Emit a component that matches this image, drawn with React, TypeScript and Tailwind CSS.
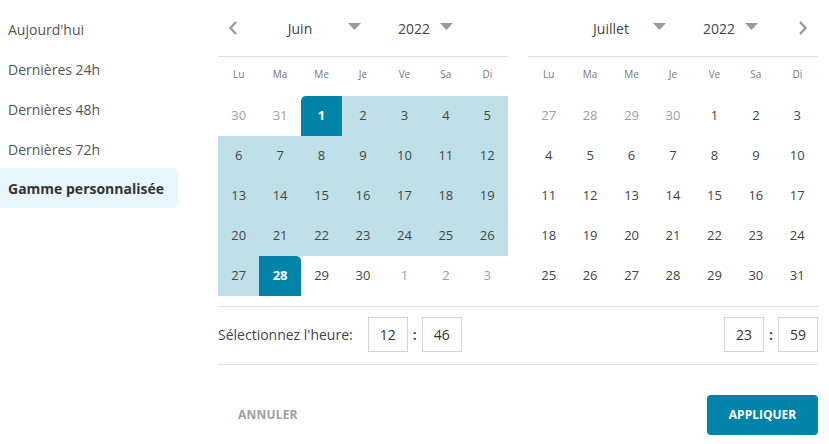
import React from "react";

type Cell = { d: number; out?: boolean; sel?: "start" | "end"; range?: boolean };

const june: Cell[] = [
  { d: 30, out: true }, { d: 31, out: true }, { d: 1, sel: "start" },
  ...[2,3,4,5,6,7,8,9,10,11,12,13,14,15,16,17,18,19,20,21,22,23,24,25,26,27].map((d) => ({ d, range: true })),
  { d: 28, sel: "end" }, { d: 29 }, { d: 30 }, { d: 1, out: true }, { d: 2, out: true }, { d: 3, out: true },
];

const july: Cell[] = [
  { d: 27, out: true }, { d: 28, out: true }, { d: 29, out: true }, { d: 30, out: true },
  ...Array.from({ length: 31 }, (_, i) => ({ d: i + 1 })),
];

const dayNames = ["Lu", "Ma", "Me", "Je", "Ve", "Sa", "Di"];

function Triangle() {
  return (
    <svg width="13" height="7" viewBox="0 0 13 7" className="mt-[-4px]">
      <path d="M0 0 L13 0 L6.5 7 Z" fill="#9a9a9a" />
    </svg>
  );
}

function Grid({ cells }: { cells: Cell[] }) {
  return (
    <div className="grid grid-cols-7">
      {cells.map((c, i) => {
        let cls = "h-[40px] flex items-center justify-center text-[13px] ";
        if (c.sel) {
          cls += "bg-[#0083a8] text-white font-bold ";
          cls += c.sel === "start" ? "rounded-tl-[5px] " : "rounded-tr-[5px] ";
        } else if (c.range) {
          cls += "bg-[#c0e0e8] text-[#444] ";
        } else if (c.out) {
          cls += "text-[#a0a0a0] ";
        } else {
          cls += "text-[#444] ";
        }
        return (
          <div key={i} className={cls}>
            {c.d}
          </div>
        );
      })}
    </div>
  );
}

function DayNames() {
  return (
    <div className="grid grid-cols-7 h-[36px] border-t border-[#e2e2e2]">
      {dayNames.map((n) => (
        <div key={n} className="flex items-center justify-center text-[10px] text-[#777]">
          {n}
        </div>
      ))}
    </div>
  );
}

function TimeBox({ v }: { v: string }) {
  return (
    <div className="w-[40px] h-[35px] border border-[#d4d4d4] flex items-center justify-center text-[14px] text-[#333]">
      {v}
    </div>
  );
}

export default function App() {
  return (
    <div className="w-[829px] h-[444px] bg-white flex font-['Open_Sans',sans-serif] text-[#333]">
      <div className="w-[178px] pt-[9px] flex flex-col">
        {["Aujourd'hui", "Dernières 24h", "Dernières 48h", "Dernières 72h"].map((t) => (
          <div key={t} className="h-[40px] flex items-center pl-[8px] text-[14px] text-[#555]">
            {t}
          </div>
        ))}
        <div className="h-[40px] mt-[-1px] flex items-center pl-[8px] text-[14px] font-bold text-[#333] bg-[#e8f6fd] rounded-r-[5px]">
          Gamme personnalisée
        </div>
      </div>
      <div className="ml-[40px] w-[600px] flex flex-col">
        <div className="flex gap-[20px]">
          <div className="w-[290px]">
            <div className="h-[56px] flex items-center">
              <div className="w-[40px] pl-[10px] flex items-center">
                <svg width="10" height="16" viewBox="0 0 10 16">
                  <path d="M8 2 L2.5 8 L8 14" fill="none" stroke="#9a9a9a" strokeWidth="2.4" />
                </svg>
              </div>
              <div className="w-[84px] text-center text-[14px] text-[#444]">Juin</div>
              <div className="ml-[6px]"><Triangle /></div>
              <div className="ml-[37px] text-[14px] text-[#444]">2022</div>
              <div className="ml-[10px]"><Triangle /></div>
            </div>
            <DayNames />
            <div className="mt-[4px]">
              <Grid cells={june} />
            </div>
          </div>
          <div className="w-[290px]">
            <div className="h-[56px] flex items-center">
              <div className="ml-[41px] w-[84px] text-center text-[14px] text-[#444]">Juillet</div>
              <div className="ml-[0px]"><Triangle /></div>
              <div className="ml-[37px] text-[14px] text-[#444]">2022</div>
              <div className="ml-[10px]"><Triangle /></div>
              <div className="ml-auto pr-[10px] flex items-center">
                <svg width="10" height="16" viewBox="0 0 10 16">
                  <path d="M2 2 L7.5 8 L2 14" fill="none" stroke="#9a9a9a" strokeWidth="2.4" />
                </svg>
              </div>
            </div>
            <DayNames />
            <div className="mt-[4px]">
              <Grid cells={july} />
            </div>
          </div>
        </div>
        <div className="mt-[10px] border-t border-[#e2e2e2] pt-[10px] pb-[12px] border-b flex items-center">
          <span className="text-[14px] text-[#444]">Sélectionnez l'heure:</span>
          <div className="ml-[15px] flex items-center">
            <TimeBox v="12" />
            <span className="w-[14px] text-center text-[14px] font-bold text-[#555]">:</span>
            <TimeBox v="46" />
          </div>
          <div className="ml-auto flex items-center">
            <TimeBox v="23" />
            <span className="w-[14px] text-center text-[14px] font-bold text-[#555]">:</span>
            <TimeBox v="59" />
          </div>
        </div>
        <div className="mt-[30px] flex items-center justify-between">
          <button className="h-[40px] px-[20px] text-[12px] font-bold text-[#a0a0a0] tracking-[0.2px]">
            ANNULER
          </button>
          <button className="h-[40px] w-[111px] rounded-[4px] bg-[#0083a8] text-white text-[12px] font-bold">
            APPLIQUER
          </button>
        </div>
      </div>
    </div>
  );
}
